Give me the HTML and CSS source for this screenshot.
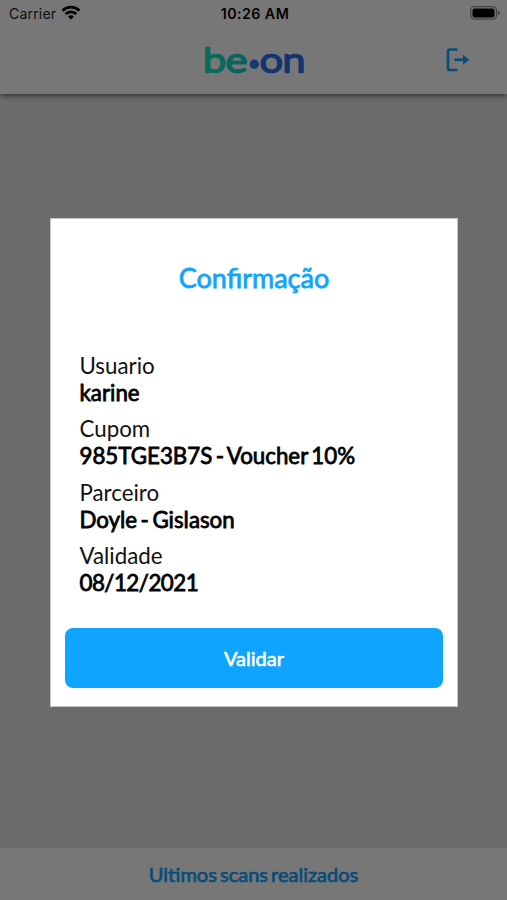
FILE: index.html
```html
<!DOCTYPE html>
<html lang="pt-BR">
<head>
  <meta charset="UTF-8">
  <meta name="viewport" content="width=device-width, initial-scale=1.0">
  <title>be•on - Confirmação</title>
  <link rel="stylesheet" href="styles.css">
</head>
<body>
  <div class="app">
    <header class="header">
      <div class="status-bar">
        <div class="carrier">
          <span>Carrier</span>
          <svg class="wifi" viewBox="0 0 20 15" fill="none" stroke="#000" stroke-width="2.9">
            <path d="M1.6 5.6a12 12 0 0 1 16.8 0"/>
            <path d="M4.7 9a7.6 7.6 0 0 1 10.6 0"/>
            <path d="M10 14.6 6.9 11.5a4.4 4.4 0 0 1 6.2 0z" fill="#000" stroke="none"/>
          </svg>
        </div>
        <span class="clock">10:26 AM</span>
        <svg class="battery" viewBox="0 0 31 14">
          <rect x=".7" y=".7" width="25.8" height="12.4" rx="3.8" fill="none" stroke="#8f8f8f" stroke-width="1.3"/>
          <rect x="2.5" y="2.4" width="22" height="9" rx="2" fill="#000"/>
          <path d="M28 4.6c2.4 1 2.4 3.8 0 4.8z" fill="#8f8f8f"/>
        </svg>
      </div>
      <div class="nav">
        <svg class="logo" viewBox="0 0 100 34">
          <defs>
            <linearGradient id="green" gradientUnits="userSpaceOnUse" x1="0" y1="0" x2="42" y2="0">
              <stop offset="0" stop-color="#14e6c4"/>
              <stop offset="1" stop-color="#18d2c8"/>
            </linearGradient>
          </defs>
          <text x="-.8" y="29" textLength="44" lengthAdjust="spacingAndGlyphs" fill="url(#green)" stroke="url(#green)">be</text>
          <circle cx="50.3" cy="21.2" r="4.6" fill="#2b78f5"/>
          <text x="56" y="29" textLength="45" lengthAdjust="spacingAndGlyphs" fill="#2b70ee" stroke="#2b70ee">on</text>
        </svg>
        <svg class="logout" viewBox="0 0 24 24" fill="none" stroke="#0fa4ff" stroke-width="2.6">
          <path d="M11.5 1.5H3.8Q2 1.5 2 3.3V20.2Q2 22 3.8 22H11.5"/>
          <path d="M8.5 11.7H19"/>
          <path d="M17 6.6 23.2 11.7 17 16.8z" fill="#0fa4ff" stroke="none"/>
        </svg>
      </div>
    </header>
    <main class="content"></main>
    <footer class="footer">Ultimos scans realizados</footer>
  </div>

  <div class="overlay">
    <div class="modal">
      <h1>Confirmação</h1>
      <dl class="details">
        <dt>Usuario</dt>
        <dd>karine</dd>
        <dt>Cupom</dt>
        <dd>985TGE3B7S - Voucher 10%</dd>
        <dt>Parceiro</dt>
        <dd>Doyle - Gislason</dd>
        <dt>Validade</dt>
        <dd class="date">08/12/2021</dd>
      </dl>
      <button class="btn" type="button">Validar</button>
    </div>
  </div>
</body>
</html>
```

FILE: styles.css
```css
*, *::before, *::after { box-sizing: border-box; margin: 0; padding: 0; }
html, body { height: 100%; }
body { font-family: Lato, sans-serif; overflow: hidden; }

.app { height: 100%; display: flex; flex-direction: column; background: #e6e6e6; }

.header {
  height: 94px; background: #fff; position: relative;
  box-shadow: 0 2px 5px rgba(0,0,0,0.5);
}
.status-bar {
  display: grid; grid-template-columns: 1fr auto 1fr; align-items: center;
  height: 27px; padding: 0 6px 0 9px;
  font-family: Inter, sans-serif; font-size: 14.2px; color: #000;
}
.carrier { display: flex; align-items: center; gap: 5px; color: #262626; letter-spacing: 0.1px; }
.wifi { width: 20px; height: 15px; margin-top: -2px; }
.clock { font-weight: 600; font-size: 14.2px; letter-spacing: 0.45px; }
.battery { width: 31px; height: 14px; margin-top: -1px; justify-self: end; }

.nav {
  display: grid; grid-template-columns: 1fr auto 1fr; align-items: center;
  height: 66px; padding: 0 37px;
}
.logo { width: 100px; height: 34px; grid-column: 2; overflow: visible; }
.logo text { font-size: 34px; font-weight: 300; stroke-width: 2.7px; stroke-linejoin: round; }
.logout { width: 24px; height: 24px; justify-self: end; }

.content { flex: 1; }
.footer {
  height: 52px; line-height: 53px; background: #fff; text-align: center;
  font-size: 20px; word-spacing: -2px; color: #0fa4ff; -webkit-text-stroke: 0.7px #0fa4ff;
}

.overlay {
  position: fixed; inset: 0; background: rgba(0,0,0,0.535);
  display: flex; align-items: flex-start; justify-content: center; padding-top: 218px;
}
.modal {
  width: 408px; height: 489px; padding: 42px 14px 18px; margin-left: 1px;
  background: #fff; border: 1px solid #c4c4c4;
  display: flex; flex-direction: column;
}
h1 {
  font-size: 27px; line-height: 34px; font-weight: 400; text-align: center;
  color: #0fa4ff; -webkit-text-stroke: 0.8px #0fa4ff;
}
.details { padding: 57px 14.5px 0; font-size: 22.3px; line-height: 27px; color: #111; }
.details dd { margin-bottom: 9.3px; word-spacing: -2.2px; color: #000; -webkit-text-stroke: 0.8px #000; }
.details .date { letter-spacing: -0.5px; }
.btn {
  margin-top: auto; height: 60px; border: none; border-radius: 8px;
  background: #0fa4ff; color: #fff; font-family: inherit; font-size: 20px;
  -webkit-text-stroke: 0.6px #fff; cursor: pointer;
}
```
